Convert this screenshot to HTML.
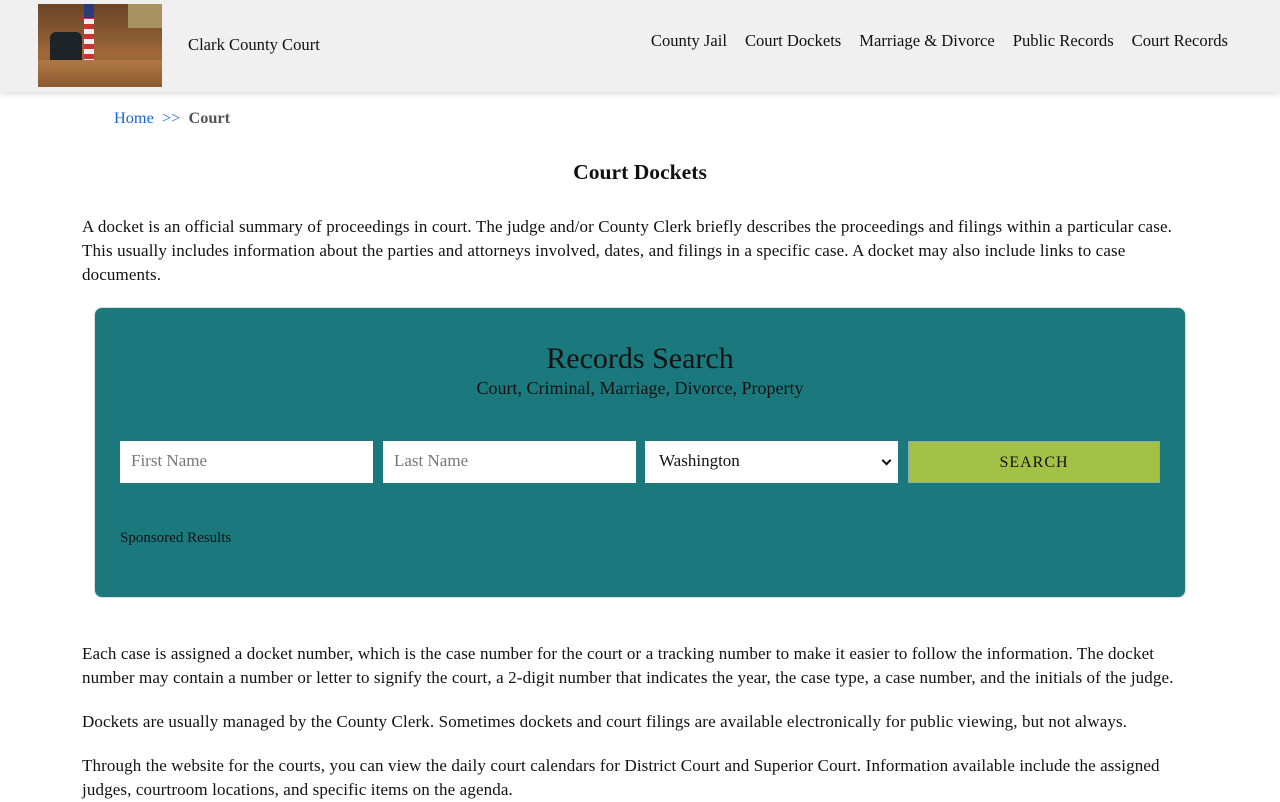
<!DOCTYPE html>
<html><head><meta charset="utf-8"><style>
*{box-sizing:border-box;margin:0;padding:0}
body{width:1280px;height:800px;overflow:hidden;background:#fff;font-family:"Liberation Serif",serif;color:#111}
.hdr{height:92px;background:#f0f0f0;box-shadow:0 2px 6px rgba(0,0,0,.15);position:relative}
.logo{position:absolute;left:38px;top:4px;width:124px;height:83px;background:linear-gradient(180deg,#6b4526 0%,#8a5a33 40%,#a0693a 60%,#7a4a26 100%);overflow:hidden}
.logo .chair{position:absolute;left:12px;top:28px;width:32px;height:34px;background:#1d2326;border-radius:6px 6px 2px 2px}
.logo .flag{position:absolute;left:46px;top:0;width:10px;height:58px;background:repeating-linear-gradient(180deg,#c33 0 5px,#eee 5px 10px)}
.logo .flag:before{content:"";position:absolute;left:0;top:0;width:10px;height:14px;background:#2a3a7a}
.logo .desk{position:absolute;left:0;top:56px;width:124px;height:27px;background:linear-gradient(180deg,#b07845,#8b5a30)}
.logo .wall{position:absolute;right:0;top:0;width:34px;height:24px;background:#a8925f}
.site{position:absolute;left:188px;top:35px;font-size:16.6px}
nav{position:absolute;right:52px;top:31px;font-size:16.6px}
nav a{color:#111;text-decoration:none;margin-left:18px}
.bc{position:absolute;left:114px;top:108px;font-size:16.3px}
.bc a{color:#1a66d6;text-decoration:none}
.bc b{color:#555}
h1{position:absolute;left:0;width:1280px;top:160px;text-align:center;font-size:21.6px;font-weight:bold}
p{position:absolute;left:82px;width:1110px;font-size:17px;letter-spacing:.12px;line-height:24px}
.box{position:absolute;left:94px;top:307px;width:1092px;height:291px;background:#1b797e;border-radius:8px;border:1px solid #ddd}
.box h2{position:absolute;top:34px;width:100%;text-align:center;font-weight:normal;font-size:30px;color:#111}
.box .sub{position:absolute;top:70px;width:100%;text-align:center;font-size:18px}
.in{position:absolute;top:133px;height:42px;width:253px;background:#fff;font-size:17px;color:#777;padding:10px 11px}
.sel{color:#111;padding-left:14px}
.sel:after{content:"";position:absolute;right:8px;top:16px;width:5px;height:5px;border-right:2px solid #111;border-bottom:2px solid #111;transform:rotate(45deg)}
.btn{position:absolute;left:813px;top:133px;width:252px;height:42px;background:#a3c144;border:1px solid #8aa;text-align:center;line-height:42px;letter-spacing:1px;font-size:16px}
.sp{position:absolute;left:25px;top:222px;font-size:15px}
</style></head><body>
<div class="hdr">
<div class="logo"><div class="wall"></div><div class="chair"></div><div class="flag"></div><div class="desk"></div></div>
<div class="site">Clark County Court</div>
<nav><a>County Jail</a><a>Court Dockets</a><a>Marriage &amp; Divorce</a><a>Public Records</a><a>Court Records</a></nav>
</div>
<div class="bc"><a>Home</a> &nbsp;<a>&gt;&gt;</a>&nbsp; <b>Court</b></div>
<h1>Court Dockets</h1>
<p style="top:215px">A docket is an official summary of proceedings in court. The judge and/or County Clerk briefly describes the proceedings and filings within a particular case. This usually includes information about the parties and attorneys involved, dates, and filings in a specific case. A docket may also include links to case documents.</p>
<div class="box">
<h2>Records Search</h2>
<div class="sub">Court, Criminal, Marriage, Divorce, Property</div>
<div class="in" style="left:25px">First Name</div>
<div class="in" style="left:288px">Last Name</div>
<div class="in sel" style="left:550px">Washington</div>
<div class="btn">SEARCH</div>
<div class="sp">Sponsored Results</div>
</div>
<p style="top:642px">Each case is assigned a docket number, which is the case number for the court or a tracking number to make it easier to follow the information. The docket number may contain a number or letter to signify the court, a 2-digit number that indicates the year, the case type, a case number, and the initials of the judge.</p>
<p style="top:710px">Dockets are usually managed by the County Clerk. Sometimes dockets and court filings are available electronically for public viewing, but not always.</p>
<p style="top:754px">Through the website for the courts, you can view the daily court calendars for District Court and Superior Court. Information available include the assigned judges, courtroom locations, and specific items on the agenda.</p>
</body></html>
